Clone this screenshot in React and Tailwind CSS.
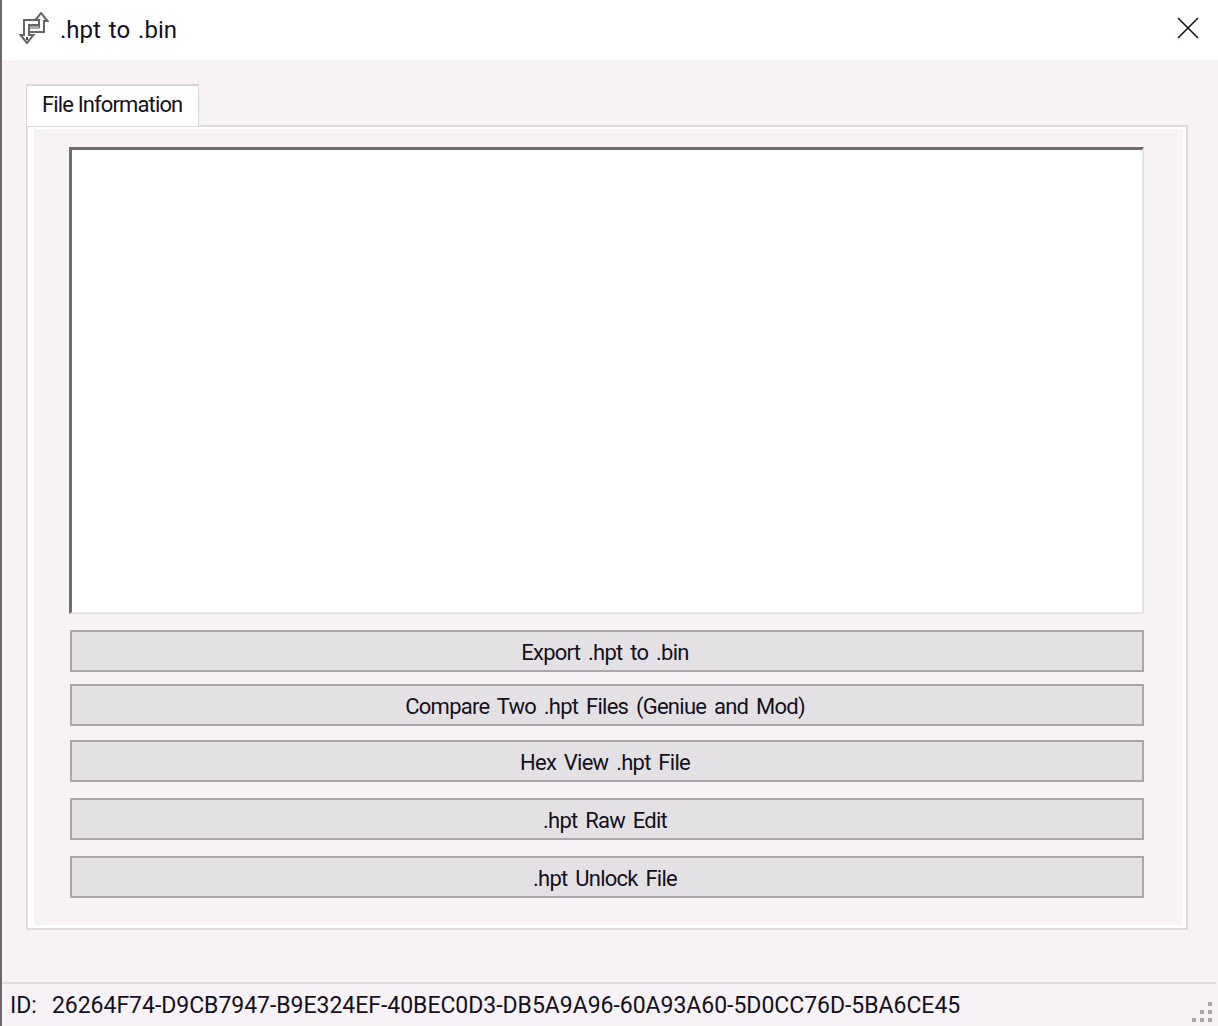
const buttons = [
  { label: "Export .hpt to .bin", cls: "mt-[16px]" },
  { label: "Compare Two .hpt Files (Geniue and Mod)", cls: "mt-[12px]" },
  { label: "Hex View .hpt File", cls: "mt-[14px]" },
  { label: ".hpt Raw Edit", cls: "mt-[16px]" },
  { label: ".hpt Unlock File", cls: "mt-[16px]" },
];

function AppIcon() {
  return (
    <svg width="30" height="32" viewBox="0 0 30 32" fill="none" className="shrink-0 -mt-[5px]">
      {/* arrow pointing up, right side */}
      <path d="M22 1l6.500 8H25v11H10v-5h10V9h-4.500z" fill="#fff" stroke="#666" strokeWidth="2" />
      {/* arrow pointing down, left side */}
      <path d="M8 31L1.500 23H5V8h15v5H10v10h4.500z" fill="#fff" stroke="#666" strokeWidth="2" />
      <path d="M11 15.500h9" stroke="#a8a8a8" strokeWidth="3" />
      <path d="M8 28v-3" stroke="#4a4468" strokeWidth="2" />
    </svg>
  );
}

function CloseIcon() {
  return (
    <svg width="22" height="22" viewBox="0 0 22 22" className="shrink-0 -mt-[5px]">
      <path d="M1 1l20 20M21 1L1 21" stroke="#1a0f1f" strokeWidth="1.600" />
    </svg>
  );
}

function Grip() {
  const dots = [
    "col-start-3 row-start-1",
    "col-start-2 row-start-2",
    "col-start-3 row-start-2",
    "col-start-1 row-start-3",
    "col-start-2 row-start-3",
    "col-start-3 row-start-3",
  ];
  return (
    <div className="grid grid-cols-[4px_4px_4px] grid-rows-[4px_4px_4px] gap-[4px]">
      {dots.map((d) => (
        <div key={d} className={`bg-[#a9a6a9] ${d}`} />
      ))}
    </div>
  );
}

export default function App() {
  return (
    <div
      className="w-[1218px] h-[1026px] overflow-hidden flex flex-col bg-[#f6f2f6] border-l-2 border-[#6b686b] text-[#15101c]"
      style={{ fontFamily: 'Roboto, "Liberation Sans", sans-serif' }}
    >
      {/* Title bar */}
      <div className="h-[60px] shrink-0 bg-white flex items-center pl-[17px] pr-[19px]">
        <AppIcon />
        <span className="ml-[11px] text-[24px] [word-spacing:2px]">.hpt to .bin</span>
        <div className="flex-1" />
        <CloseIcon />
      </div>

      {/* Tabs */}
      <div className="flex-1 pt-[24px] pl-[24px] pr-[30px]">
        <div className="relative z-10 w-[173px] h-[42px] -mb-px bg-white border border-b-0 border-[#d9d7d9] border-t-2 pl-[15px] pt-[4px] text-[22px] leading-[30px] tracking-[-0.87px] whitespace-nowrap">
          File Information
        </div>
        <div className="h-[805px] border-2 border-[#dcdadc]">
          <div className="h-full border-[3px] border-white border-l-[6px] border-t-[2px] pl-[35px] pr-[39px] pt-[18px]">
            <div className="h-[467px] bg-white border-t-[3px] border-l-[3px] border-[#6e6e6e] border-r-2 border-b-2 border-r-[#e4e2e4] border-b-[#e4e2e4]" />
            {buttons.map((b) => (
              <div
                key={b.label}
                className={`${b.cls} ml-px h-[42px] pt-[2px] pr-[4px] bg-[#e3e1e4] border-2 border-[#aaa6aa] flex items-center justify-center text-[22px] tracking-[-0.74px] [word-spacing:3px] whitespace-nowrap`}
              >
                {b.label}
              </div>
            ))}
          </div>
        </div>
      </div>

      {/* Status bar */}
      <div className="h-[44px] shrink-0 mr-[2px] pt-[2px] border-t-2 border-[#dcdadc] flex items-center pl-[8px] pr-[4px] text-[23px]">
        <span>ID:</span>
        <span className="ml-[15px] tracking-[-0.03px]">26264F74-D9CB7947-B9E324EF-40BEC0D3-DB5A9A96-60A93A60-5D0CC76D-5BA6CE45</span>
        <div className="flex-1" />
        <div className="self-end mb-[4px]">
          <Grip />
        </div>
      </div>
    </div>
  );
}
